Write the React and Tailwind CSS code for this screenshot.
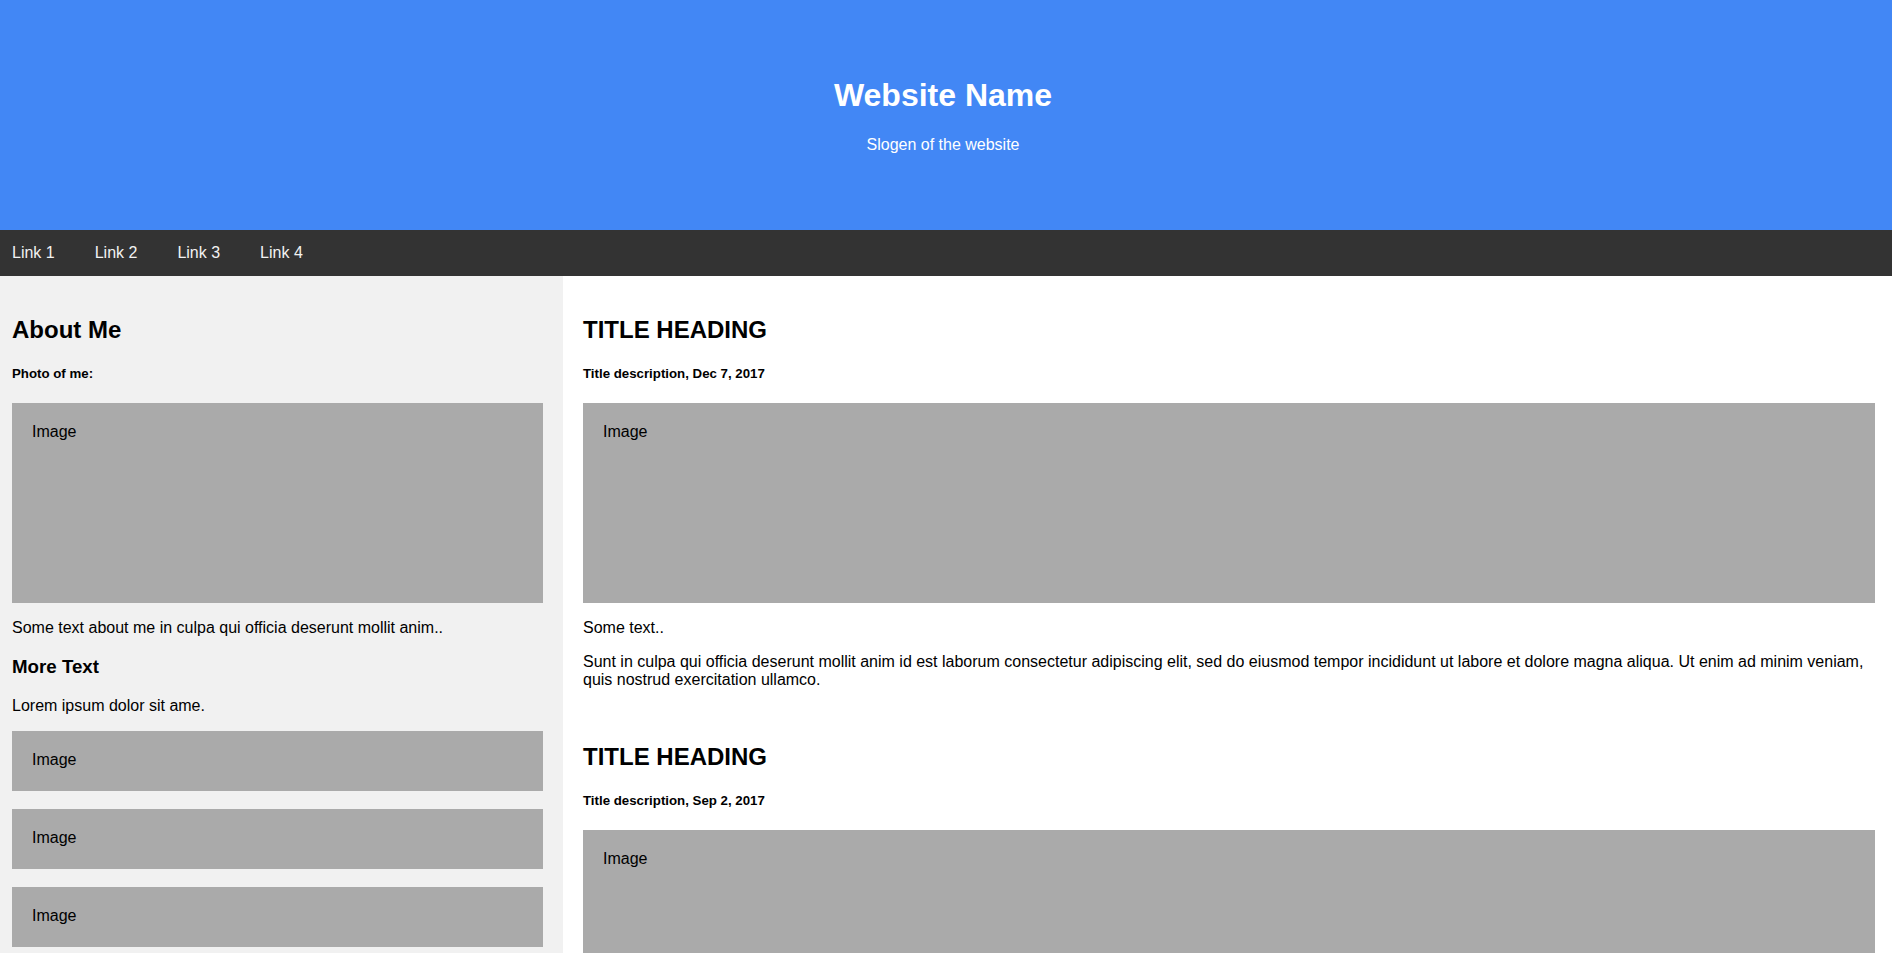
import React from 'react';

const links = ['Link 1', 'Link 2', 'Link 3', 'Link 4'];

function FakeImg({ h }) {
  return (
    <div className={`bg-[#aaaaaa] px-5 pt-5 ${h}`}>
      <span className="text-[16px] leading-[normal]">Image</span>
    </div>
  );
}

function Post({ date }) {
  return (
    <div>
      <h2 className="mt-[20px] mb-[22px] text-[24px] font-bold leading-[normal]">TITLE HEADING</h2>
      <h5 className="mb-[22px] text-[13.28px] font-bold leading-[normal]">Title description, {date}</h5>
      <FakeImg h="h-[200px]" />
      <p className="mt-[16px] leading-[normal]">Some text..</p>
      <p className="mt-[16px] leading-[normal]">
        Sunt in culpa qui officia deserunt mollit anim id est laborum consectetur adipiscing elit, sed do eiusmod tempor incididunt ut labore et dolore magna aliqua. Ut enim ad minim veniam, quis nostrud exercitation ullamco.
      </p>
      <div className="h-[34px]" />
    </div>
  );
}

export default function App() {
  return (
    <div className="min-h-screen bg-white text-black text-[16px] leading-[normal] font-['Liberation_Sans',Arial,sans-serif]">
      {/* header */}
      <header className="h-[230px] bg-[#4287f5] text-white text-center pt-[77px] pr-[6px]">
        <h1 className="text-[32px] font-bold leading-[normal] mb-[22px]">Website Name</h1>
        <p className="text-[16px] leading-[normal]">Slogen of the website</p>
      </header>

      {/* navbar */}
      <nav className="h-[46px] bg-[#333333] flex items-center pl-[12px] gap-[40px]">
        {links.map((l) => (
          <a key={l} href="#" className="text-[#f2f2f2] text-[16px] leading-[normal]">
            {l}
          </a>
        ))}
      </nav>

      {/* content */}
      <div className="flex">
        <aside className="w-[563px] shrink-0 bg-[#f1f1f1] pt-5 pl-[12px] pr-5 pb-5">
          <h2 className="mt-[20px] mb-[22px] text-[24px] font-bold leading-[normal]">About Me</h2>
          <h5 className="mb-[22px] text-[13.28px] font-bold leading-[normal]">Photo of me:</h5>
          <FakeImg h="h-[200px]" />
          <p className="mt-[16px] mb-[19px] leading-[normal]">Some text about me in culpa qui officia deserunt mollit anim..</p>
          <h3 className="text-[18.72px] font-bold leading-[normal] mb-[19px]">More Text</h3>
          <p className="mb-[16px] leading-[normal]">Lorem ipsum dolor sit ame.</p>
          <div className="flex flex-col gap-[18px]">
            <FakeImg h="h-[60px]" />
            <FakeImg h="h-[60px]" />
            <FakeImg h="h-[60px]" />
          </div>
        </aside>

        <main className="flex-1 pt-5 pl-5 pr-[17px] pb-5">
          <Post date="Dec 7, 2017" />
          <Post date="Sep 2, 2017" />
        </main>
      </div>
    </div>
  );
}
